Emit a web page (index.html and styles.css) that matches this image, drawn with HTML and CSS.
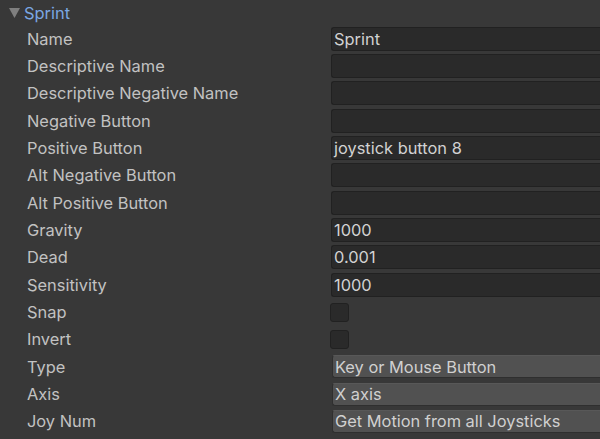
FILE: index.html
```html
<!DOCTYPE html>
<html>
<head>
<meta charset="utf-8">
<link rel="stylesheet" href="styles.css">
</head>
<body>
<div class="inspector">
  <div class="header">
    <svg class="arrow" width="11" height="10" viewBox="0 0 11 10"><polygon points="0,0 11,0 5.5,10" fill="#7f7f7f"/></svg>
    <span class="title">Sprint</span>
  </div>
  <div class="rows">
    <div class="row"><span class="label">Name</span><div class="field text">Sprint</div></div>
    <div class="row"><span class="label">Descriptive Name</span><div class="field text"></div></div>
    <div class="row"><span class="label">Descriptive Negative Name</span><div class="field text"></div></div>
    <div class="row"><span class="label">Negative Button</span><div class="field text"></div></div>
    <div class="row"><span class="label">Positive Button</span><div class="field text">joystick button 8</div></div>
    <div class="row"><span class="label">Alt Negative Button</span><div class="field text"></div></div>
    <div class="row"><span class="label">Alt Positive Button</span><div class="field text"></div></div>
    <div class="row"><span class="label">Gravity</span><div class="field text">1000</div></div>
    <div class="row"><span class="label">Dead</span><div class="field text">0.001</div></div>
    <div class="row"><span class="label">Sensitivity</span><div class="field text">1000</div></div>
    <div class="row"><span class="label">Snap</span><div class="check"></div></div>
    <div class="row"><span class="label">Invert</span><div class="check"></div></div>
    <div class="row"><span class="label">Type</span><div class="field drop">Key or Mouse Button</div></div>
    <div class="row"><span class="label">Axis</span><div class="field drop">X axis</div></div>
    <div class="row"><span class="label">Joy Num</span><div class="field drop">Get Motion from all Joysticks</div></div>
  </div>
</div>
</body>
</html>
```
FILE: styles.css
```css
html, body {
  margin: 0;
  padding: 0;
  background: #383838;
  overflow: hidden;
}
.inspector {
  width: 600px;
  height: 439px;
  overflow: hidden;
  font-family: Inter, "Noto Sans", sans-serif;
  font-size: 16.4px;
  color: #c2c2c2;
}
.header {
  height: 25px;
  display: flex;
  align-items: center;
  padding-left: 9px;
  gap: 4px;
}
.arrow {
  margin-top: 1px;
}
.title {
  color: #7ba7e3;
  font-size: 16.4px;
}
.rows {
  display: flex;
  flex-direction: column;
}
.row {
  height: 27.35px;
  display: flex;
  align-items: center;
}
.label {
  flex: none;
  box-sizing: border-box;
  width: 331px;
  padding-left: 27px;
  white-space: nowrap;
}
.field {
  height: 24px;
  box-sizing: border-box;
  flex: 1;
  min-width: 0;
  display: flex;
  align-items: center;
  padding-left: 2px;
  border-radius: 3px 0 0 3px;
  white-space: nowrap;
  overflow: hidden;
}
.text {
  background: #2a2a2a;
  border: 1px solid #212121;
  border-right: none;
  color: #d2d2d2;
}
.drop {
  background: #515151;
  border: 1px solid #2f2f2f;
  border-right: none;
  border-top-color: #585858;
  color: #d0d0d0;
  height: 23px;
  padding-left: 2px;
  margin-left: 1px;
}
.check {
  flex: none;
  width: 19px;
  height: 19px;
  box-sizing: border-box;
  background: #2a2a2a;
  border: 1px solid #212121;
  border-radius: 3px;
  margin-left: -1px;
}
```
